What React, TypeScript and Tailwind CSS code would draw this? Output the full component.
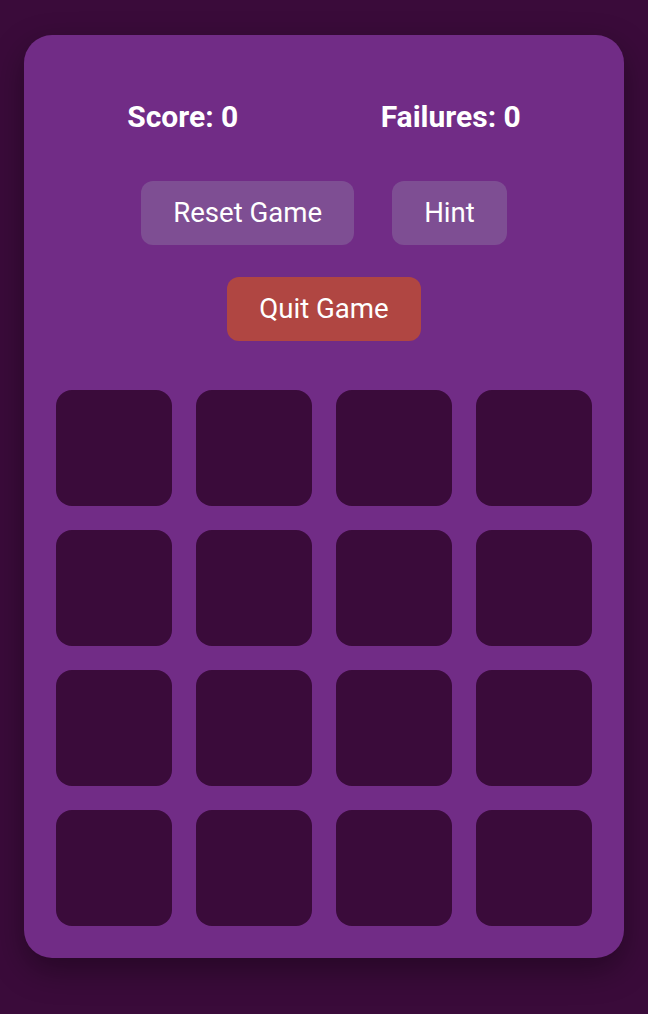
const TILES = Array.from({ length: 16 }, (_, i) => i);

export default function App() {
  return (
    <div className="min-h-screen w-full bg-[#3a0b3a] pt-[35px] font-['Roboto',sans-serif] text-white">
      <div className="mx-auto flex w-[600px] flex-col rounded-[28px] bg-[#712c86] px-8 pb-8 pt-8 shadow-[0_12px_32px_rgba(0,0,0,0.35)]">
        {/* Scores */}
        <div className="mt-8 flex justify-around text-[30px] font-bold leading-[35px]">
          <span>Score: 0</span>
          <span>Failures: 0</span>
        </div>

        {/* Actions */}
        <div className="mt-[47px] flex justify-center gap-[38px]">
          <button className="rounded-[12px] bg-[#7e4e93] px-8 py-4 text-[27.6px] leading-[32px]">
            Reset Game
          </button>
          <button className="rounded-[12px] bg-[#7e4e93] px-8 py-4 text-[27.6px] leading-[32px]">
            Hint
          </button>
        </div>
        <div className="mt-8 flex justify-center">
          <button className="rounded-[12px] bg-[#b04642] px-8 py-4 text-[27.6px] leading-[32px]">
            Quit Game
          </button>
        </div>

        {/* Board */}
        <div className="mt-[49px] grid grid-cols-4 gap-6">
          {TILES.map((i) => (
            <div key={i} className="h-[116px] rounded-[16px] bg-[#3a0b3a]" />
          ))}
        </div>
      </div>
    </div>
  );
}
